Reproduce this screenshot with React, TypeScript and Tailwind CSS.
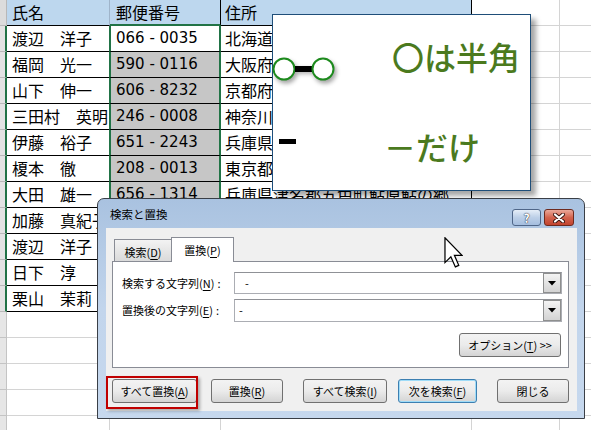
import React from "react";

const rows: [string, string, string][] = [
  ["渡辺　洋子", "066 - 0035", "北海道札幌市中央区北一条西"],
  ["福岡　光一", "590 - 0116", "大阪府堺市南区若松台"],
  ["山下　伸一", "606 - 8232", "京都府京都市左京区田中東春菜町"],
  ["三田村　英明", "246 - 0008", "神奈川県横浜市瀬谷区五貫目町"],
  ["伊藤　裕子", "651 - 2243", "兵庫県神戸市西区神出町"],
  ["榎本　徹", "208 - 0013", "東京都武蔵村山市大南"],
  ["大田　雄一", "656 - 1314", "兵庫県津名郡五色町鮎原鮎の郷"],
  ["加藤　真紀子", "460 - 0002", "愛知県名古屋市中区丸の内"],
  ["渡辺　洋子", "812 - 0011", "福岡県福岡市博多区博多駅前"],
  ["日下　淳", "700 - 0024", "岡山県岡山市北区駅元町"],
  ["栗山　茉莉", "980 - 0021", "宮城県仙台市青葉区中央"],
];

function Btn({
  children,
  className = "",
}: {
  children: React.ReactNode;
  className?: string;
}) {
  return (
    <div
      className={`h-[24px] flex items-center justify-center rounded-[3px] border bg-linear-to-b from-[#f3f3f3] via-[#ebebeb] to-[#d4d4d4] text-[11px] leading-none text-black ${className}`}
    >
      {children}
    </div>
  );
}

function U({ children }: { children: React.ReactNode }) {
  return <span className="underline underline-offset-[2px]">{children}</span>;
}

function Circle() {
  return (
    <svg width="24" height="24" viewBox="0 0 24 24" className="drop-shadow-[2px_3px_2px_rgba(0,0,0,0.35)]">
      <circle cx="12" cy="12" r="10.5" fill="white" stroke="#1d8a1d" strokeWidth="2" />
    </svg>
  );
}

function DropBtn() {
  return (
    <div className="ml-auto w-[18px] h-full border border-[#8e8f8f] bg-linear-to-b from-[#f4f4f4] to-[#d3d3d3] flex items-center justify-center">
      <svg width="8" height="5" viewBox="0 0 8 5">
        <path d="M0 0 L8 0 L4 4.5 Z" fill="#000" />
      </svg>
    </div>
  );
}

export default function App() {
  return (
    <div className="relative w-[591px] h-[430px] overflow-hidden bg-white font-['Noto_Sans_CJK_JP',sans-serif] text-black">
      {/* spreadsheet */}
      <div className="flex flex-col text-[16px] leading-[25px]">
        {/* header row */}
        <div className="flex h-[26px]">
          <div className="w-[7px] shrink-0 bg-[#dcdcdc] border-b border-r border-[#b8b8b8]" />
          <div className="w-[103px] shrink-0 bg-[#bdd7ee] border-b border-b-black border-r border-r-[#9fb4ca] pl-[5px]">氏名</div>
          <div className="w-[111px] shrink-0 bg-[#bdd7ee] border-b-2 border-b-[#217346] border-r border-r-black pl-[6px]">郵便番号</div>
          <div className="w-[251px] shrink-0 bg-[#bdd7ee] border-b border-b-black border-r border-r-black pl-[4px]">住所</div>
          <div className="w-[88px] shrink-0 border-b border-r border-[#d4d4d4]" />
          <div className="flex-1 border-b border-[#d4d4d4]" />
        </div>
        {rows.map((r, i) => (
          <div key={i} className="flex h-[26px]">
            <div className="w-[7px] shrink-0 bg-[#e3e3e3] border-b border-b-[#b8b8b8] border-r-2 border-r-[#217346]" />
            <div className="w-[102px] shrink-0 border-b border-black pl-[5px] whitespace-nowrap overflow-hidden">{r[0]}</div>
            <div
              className={`w-[112px] shrink-0 border-x-2 border-x-[#217346] border-b border-b-black pl-[5px] whitespace-nowrap font-['DejaVu_Sans',sans-serif] text-[15px] ${
                i === 0 ? "bg-white" : "bg-[#c6c6c6]"
              }`}
            >
              {r[1]}
            </div>
            <div className="w-[251px] shrink-0 border-b border-b-black border-r border-r-black pl-[4px] whitespace-nowrap overflow-hidden">{r[2]}</div>
            <div className="w-[88px] shrink-0 border-b border-r border-[#d4d4d4]" />
            <div className="flex-1 border-b border-[#d4d4d4]" />
          </div>
        ))}
        {[0, 1, 2, 3, 4].map((i) => (
          <div key={`e${i}`} className="flex h-[26px]">
            <div className="w-[7px] shrink-0 bg-[#e6e6e6] border-b border-r border-[#c4c4c4]" />
            <div className="w-[103px] shrink-0 border-b border-r border-[#d4d4d4]" />
            <div className="w-[111px] shrink-0 border-b border-r border-[#d4d4d4]" />
            <div className="w-[251px] shrink-0 border-b border-r border-[#d4d4d4]" />
            <div className="w-[88px] shrink-0 border-b border-r border-[#d4d4d4]" />
            <div className="flex-1 border-b border-[#d4d4d4]" />
          </div>
        ))}
      </div>

      {/* callout */}
      <div className="absolute left-[272px] top-[14px] w-[259px] h-[177px] border border-[#1f4e79] bg-white shadow-[5px_5px_5px_rgba(0,0,0,0.35)]">
        <div className="flex h-[80px]">
          <div className="w-[119px] pt-[42px]">
            <div className="flex items-center -ml-[1px]">
              <Circle />
              <div className="w-[17px] h-[6px] bg-black -mx-[1px] drop-shadow-[2px_2px_2px_rgba(0,0,0,0.3)]" />
              <Circle />
            </div>
          </div>
          <div className="pt-[21px] text-[32px] leading-[40px] font-medium text-[#4b7a1e] whitespace-nowrap">〇は半角</div>
        </div>
        <div className="flex">
          <div className="w-[111px] pt-[44px] pl-[6px]">
            <div className="w-[17px] h-[5px] bg-black" />
          </div>
          <div className="pt-[31px] text-[32px] leading-[40px] font-medium text-[#4b7a1e] whitespace-nowrap">－だけ</div>
        </div>
      </div>

      {/* dialog */}
      <div className="absolute left-[97px] top-[198px] w-[488px] h-[221px] flex flex-col rounded-t-[7px] border border-[#3a3f47] bg-linear-to-b from-[#a9c2e0] via-[#c2d5ec] to-[#c6d8ee] pl-[8px] pr-[7px] pb-[7px] text-[11px]">
        {/* title bar */}
        <div className="h-[29px] flex items-start -ml-[8px] -mr-[7px] pl-[12px] pr-[10px]">
          <div className="pt-[8px] leading-[14px] text-[11.5px]">検索と置換</div>
          <div className="ml-auto flex gap-[3px] pt-[10px]">
            <div className="w-[29px] h-[17px] rounded-[3px] border border-[#4f6688] bg-linear-to-b from-[#e6eef8] via-[#bccfe7] to-[#a5bedf] flex items-center justify-center">
              <span className="text-[12px] leading-none font-bold text-white [text-shadow:0_0_1px_#223,0_0_1px_#223]">?</span>
            </div>
            <div className="w-[30px] h-[17px] rounded-[3px] border border-[#6e2a1e] bg-linear-to-b from-[#eaa89a] via-[#d2634e] to-[#c2432e] flex items-center justify-center">
              <svg width="12" height="10" viewBox="0 0 12 10">
                <path d="M2 1.5 L10 8.5 M10 1.5 L2 8.5" stroke="#3b1510" strokeWidth="4" strokeLinecap="round" />
                <path d="M2 1.5 L10 8.5 M10 1.5 L2 8.5" stroke="#ffffff" strokeWidth="2.2" strokeLinecap="round" />
              </svg>
            </div>
          </div>
        </div>
        {/* body */}
        <div className="flex-1 bg-[#f0f0f0] flex flex-col pl-[6px] pr-[8px] pt-[9px]">
          <div className="relative z-10 flex items-end h-[24px] pl-[2px]">
            <div className="w-[58px] h-[22px] border border-b-0 border-[#898c95] bg-linear-to-b from-[#f3f3f3] to-[#dadada] flex items-center justify-center leading-none pt-[3px]">
              検索(<U>D</U>)
            </div>
            <div className="w-[63px] h-[25px] -ml-px -mb-px border border-b-0 border-[#898c95] bg-white flex items-center justify-center leading-none">
              置換(<U>P</U>)
            </div>
          </div>
          <div className="h-[107px] border border-[#898c95] bg-white flex flex-col pt-[10px]">
            <div className="flex items-center h-[22px] pl-[9px] pr-[6px]">
              <div className="w-[112px] leading-none">
                検索する文字列(<U>N</U>)<span className="ml-[3px]">:</span>
              </div>
              <div className="flex-1 h-[22px] border border-[#abadb3] border-t-[#8f9196] flex items-center">
                <span className="pl-[10px] leading-none">-</span>
                <DropBtn />
              </div>
            </div>
            <div className="flex items-center h-[23px] mt-[5px] pl-[9px] pr-[6px]">
              <div className="w-[112px] leading-none">
                置換後の文字列(<U>E</U>)<span className="ml-[3px]">:</span>
              </div>
              <div className="flex-1 h-[23px] border border-[#abadb3] border-t-[#8f9196] flex items-center">
                <span className="pl-[4px] leading-none">-</span>
                <DropBtn />
              </div>
            </div>
            <div className="flex justify-end mt-[11px] pr-[7px]">
              <Btn className="w-[102px] border-[#707070]">
                オプション(<U>T</U>) &gt;&gt;
              </Btn>
            </div>
          </div>
          <div className="flex mt-[11px]">
            <div className="relative">
              <Btn className="w-[85px] border-[#707070]">
                すべて置換(<U>A</U>)
              </Btn>
              <div className="absolute -left-[6px] -top-[3px] w-[92px] h-[33px] border-2 border-[#c00000] shadow-[2px_2px_3px_rgba(0,0,0,0.3)]" />
            </div>
            <Btn className="w-[72px] ml-[14px] border-[#707070]">
              置換(<U>R</U>)
            </Btn>
            <Btn className="w-[84px] ml-[20px] border-[#707070]">
              すべて検索(<U>I</U>)
            </Btn>
            <Btn className="w-[79px] ml-[11px] border-[#3c7fb1] shadow-[inset_0_0_0_1px_#9fdcf8]">
              次を検索(<U>F</U>)
            </Btn>
            <Btn className="w-[72px] ml-[20px] border-[#707070]">閉じる</Btn>
          </div>
        </div>
      </div>

      {/* mouse cursor */}
      <svg
        className="absolute left-[444px] top-[237px]"
        width="19"
        height="31"
        viewBox="0 0 12 20"
      >
        <path
          d="M0.5 0.5 L0.5 16.5 L4.3 12.8 L7.2 19.3 L9.4 18.3 L6.6 11.8 L11.5 11.8 Z"
          fill="white"
          stroke="black"
          strokeWidth="0.8"
          strokeLinejoin="miter"
        />
      </svg>
    </div>
  );
}
